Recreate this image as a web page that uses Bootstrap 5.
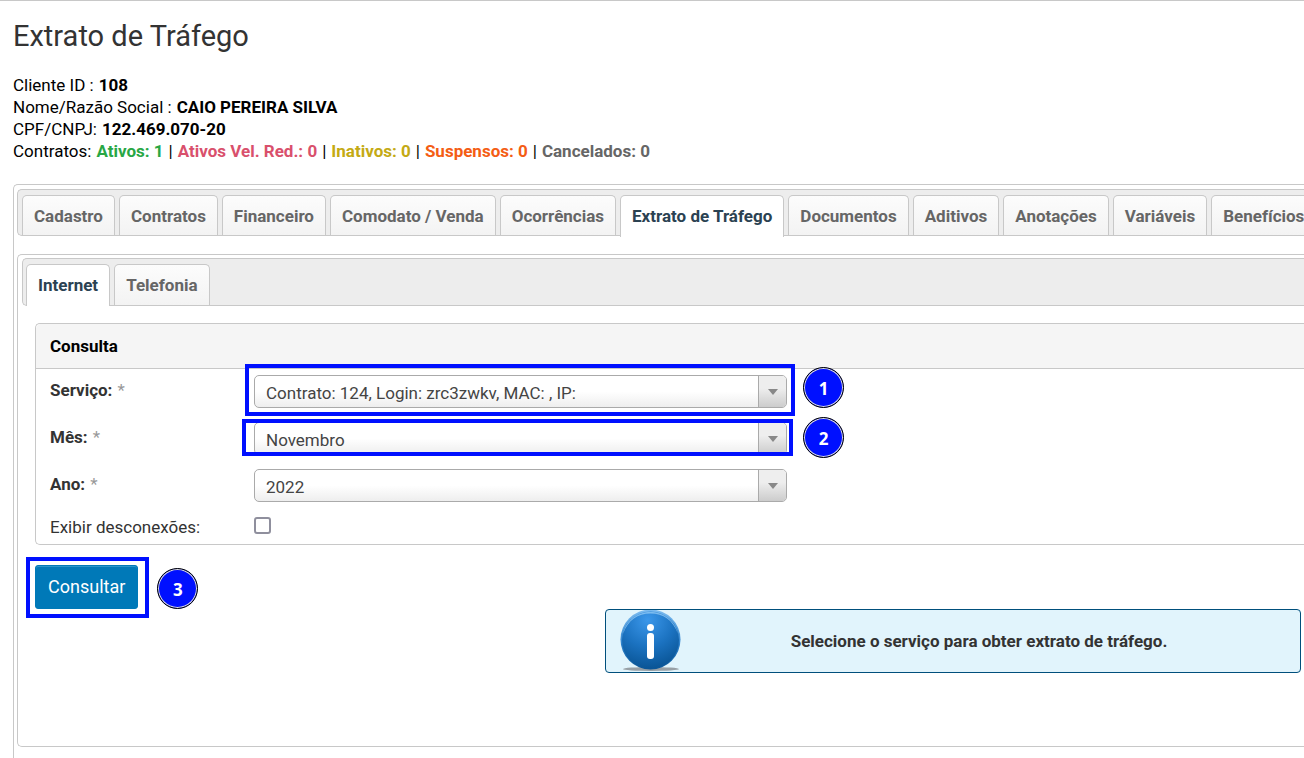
<!DOCTYPE html>
<html lang="pt-BR">
<head>
<meta charset="utf-8">
<meta name="viewport" content="width=device-width, initial-scale=1">
<title>Extrato de Tráfego</title>
<link href="https://cdn.jsdelivr.net/npm/bootstrap@5.3.0/dist/css/bootstrap.min.css" rel="stylesheet">
<style>
  :root { --line: #c8c8c8; --guide: #0010ff; }
  body { font-family: Roboto, "Liberation Sans", sans-serif; font-size: 17px; line-height: 22px; color: #000; background: #fff; overflow-x: hidden; }
  .page { border-top: 1px solid var(--line); padding-left: 13px; overflow: hidden; }
  h1 { font-size: 29px; line-height: 34px; color: #333; margin: 18px 0 21px; }
  .fact { column-gap: 5px; }
  .st-on { color: #28a745; } .st-slow { color: #d9506c; } .st-off { color: #c4aa14; }
  .st-susp { color: #f45d14; } .st-canc { color: #666; }
  /* panels run off the right edge of the window */
  .panel { border: 1px solid var(--line); border-right: 0; border-radius: 5px 0 0 5px; }
  .panel-outer { margin-top: 22px; padding: 4px 0 24px 3px; }
  .panel-inner { margin-top: 18px; padding: 3px 0 73px 4px; }
  .tabbar { background: #ededed; border: 1px solid var(--line); border-right: 0; border-radius: 5px 0 0 5px; gap: 4px; }
  .tabbar .nav-link { padding: 10px 11px 9px; line-height: 20px; font-weight: 700; color: #666; white-space: nowrap; margin: 0; border: 1px solid var(--line); border-bottom: 0; border-radius: 5px 5px 0 0; background: linear-gradient(#fcfcfc, #f3f3f3); }
  .tabbar .nav-link.active { background: #fff; color: #2b4252; margin-bottom: -2px; padding-bottom: 11px; }
  .tabs-main { padding: 5px 0 0 4px; }
  .tabs-sub { padding: 5px 0 0 3px; }
  .tabs-sub .nav-link { padding-bottom: 10px; }
  .tabs-sub .nav-link.active { margin-bottom: -1px; }
  .query { border: 1px solid var(--line); border-right: 0; border-radius: 5px 0 0 5px; margin: 17px 0 0 13px; color: #333; }
  .query-head { background: #f5f5f5; border-bottom: 1px solid var(--line); padding: 11px 14px; font-size: 17px; line-height: 22px; font-weight: 700; color: #000; margin: 0; border-radius: 5px 0 0 0; }
  .query-body { padding: 6px 14px; display: grid; grid-template-columns: 204px minmax(0, 533px); row-gap: 14px; }
  .query-body label { padding-top: 4px; }
  .query-body .check-label { padding-top: 0; }
  .req { color: #999; font-weight: 400; margin-left: 1px; }
  .pick { position: relative; height: 33px; }
  .pick select { appearance: none; width: 100%; height: 100%; font: inherit; color: #444; padding: 2px 40px 0 11px; border: 1px solid #aaa; border-radius: 5px; background: linear-gradient(#fff 50%, #eee); }
  .pick-arrow { position: absolute; top: 1px; bottom: 1px; right: 1px; width: 28px; border-left: 1px solid #aaa; border-radius: 0 4px 4px 0; background: linear-gradient(#eee 40%, #ccc); pointer-events: none; }
  .tick { appearance: none; width: 17px; height: 17px; border: 2px solid #8f8f9d; border-radius: 3px; margin: 1px 0 0; background: #fff; }
  .tick:checked { background: #0079b8; }
  .btn-query { font-size: 18px; line-height: 24px; color: #fff; background: #0079b8; border: 1px solid #0079b8; border-radius: 3px; padding: 9px 12px; box-shadow: inset 0 1px #2b95cb; }
  .btn-query:hover { background: #00699f; color: #fff; }
  .actions { margin: 20px 0 0 13px; }
  /* numbered guide marks laid over the controls */
  .guide { position: absolute; border: 4px solid var(--guide); pointer-events: none; }
  .guide-service { inset: -11px -8px -8px -9px; }
  .guide-month { inset: -3px -6px -1px -12px; }
  .guide-button { inset: -8px -11px -9px -9px; }
  .step { position: absolute; width: 41px; height: 41px; left: calc(100% + 16px); pointer-events: none; border: 1px solid #000; border-radius: 50%; background: var(--guide); box-shadow: inset 0 0 0 1px #ddd; color: #fff; font: 700 17px/42px "Noto Sans", sans-serif; text-align: center; }
  .step-service { top: -8px; }
  .step-month { top: -5px; }
  .step-button { top: 3px; left: calc(100% + 19px); }
  .notice { width: 696px; max-width: 100%; min-height: 64px; margin-right: 3px; border: 1px solid #004f7c; border-radius: 4px; background: #e1f4fc; color: #333; font-weight: 700; padding-left: 14px; }
  .notice svg { flex: none; }
</style>
</head>
<body>
<main class="page">
  <h1 class="fw-normal">Extrato de Tráfego</h1>
  <div class="fact d-flex flex-wrap"><span>Cliente ID :</span> <strong>108</strong></div>
  <div class="fact d-flex flex-wrap"><span>Nome/Razão Social :</span> <strong>CAIO PEREIRA SILVA</strong></div>
  <div class="fact d-flex flex-wrap"><span>CPF/CNPJ:</span> <strong>122.469.070-20</strong></div>
  <div class="fact d-flex flex-wrap"><span>Contratos:</span> <strong class="st-on">Ativos: 1</strong> <span>|</span> <strong class="st-slow">Ativos Vel. Red.: 0</strong> <span>|</span> <strong class="st-off">Inativos: 0</strong> <span>|</span> <strong class="st-susp">Suspensos: 0</strong> <span>|</span> <strong class="st-canc">Cancelados: 0</strong></div>

  <section class="panel panel-outer">
    <nav class="nav tabbar tabs-main flex-nowrap">
      <a class="nav-link" href="#">Cadastro</a>
      <a class="nav-link" href="#">Contratos</a>
      <a class="nav-link" href="#">Financeiro</a>
      <a class="nav-link" href="#">Comodato / Venda</a>
      <a class="nav-link" href="#">Ocorrências</a>
      <a class="nav-link active" href="#" aria-current="page">Extrato de Tráfego</a>
      <a class="nav-link" href="#">Documentos</a>
      <a class="nav-link" href="#">Aditivos</a>
      <a class="nav-link" href="#">Anotações</a>
      <a class="nav-link" href="#">Variáveis</a>
      <a class="nav-link" href="#">Benefícios</a>
    </nav>

    <section class="panel panel-inner">
      <nav class="nav tabbar tabs-sub flex-nowrap">
        <a class="nav-link active" href="#" aria-current="page">Internet</a>
        <a class="nav-link" href="#">Telefonia</a>
      </nav>

      <form>
        <div class="query">
          <h2 class="query-head">Consulta</h2>
          <div class="query-body">
            <label for="servico"><strong>Serviço:</strong> <span class="req">*</span></label>
            <div class="pick">
              <select id="servico"><option>Contrato: 124, Login: zrc3zwkv, MAC: , IP:</option></select>
              <span class="pick-arrow d-flex align-items-center justify-content-center"><svg width="10" height="6"><path d="M0 0h10L5 6z" fill="#888"/></svg></span>
              <span class="guide guide-service"></span><span class="step step-service">1</span>
            </div>
            <label for="mes"><strong>Mês:</strong> <span class="req">*</span></label>
            <div class="pick">
              <select id="mes"><option>Novembro</option></select>
              <span class="pick-arrow d-flex align-items-center justify-content-center"><svg width="10" height="6"><path d="M0 0h10L5 6z" fill="#888"/></svg></span>
              <span class="guide guide-month"></span><span class="step step-month">2</span>
            </div>
            <label for="ano"><strong>Ano:</strong> <span class="req">*</span></label>
            <div class="pick">
              <select id="ano"><option>2022</option></select>
              <span class="pick-arrow d-flex align-items-center justify-content-center"><svg width="10" height="6"><path d="M0 0h10L5 6z" fill="#888"/></svg></span>
            </div>
            <label class="check-label" for="desconexoes">Exibir desconexões:</label>
            <div><input class="tick d-block" type="checkbox" id="desconexoes"></div>
          </div>
        </div>
        <div class="actions d-flex">
          <div class="position-relative">
            <button type="button" class="btn btn-query d-block">Consultar</button>
            <span class="guide guide-button"></span><span class="step step-button">3</span>
          </div>
        </div>
      </form>

      <div class="notice d-flex align-items-center ms-auto" role="status">
        <svg width="62" height="62" viewBox="0 0 62 62" aria-hidden="true">
          <defs>
            <radialGradient id="ball" cx=".45" cy=".15" r=".85"><stop offset="0" stop-color="#3b97ea"/><stop offset=".55" stop-color="#1b72c0"/><stop offset="1" stop-color="#0a5596"/></radialGradient>
            <linearGradient id="rim" x2="0" y2="1"><stop offset="0" stop-color="#7dbcf0"/><stop offset=".6" stop-color="#2a7fca"/><stop offset="1" stop-color="#0a5596"/></linearGradient>
            <filter id="soft"><feGaussianBlur stdDeviation=".6"/></filter>
          </defs>
          <ellipse cx="31" cy="59" rx="28" ry="2" fill="#98a0a6" filter="url(#soft)"/>
          <circle cx="30.500" cy="29.500" r="30" fill="url(#rim)"/>
          <circle cx="30.500" cy="30" r="28.500" fill="url(#ball)"/>
          <path d="M3 24C6 10 18 2 30.500 2S55 10 58 24C53 10 43 3.500 30.500 3.500S8 10 3 24z" fill="#9bd0f8" opacity=".7"/>
          <circle cx="30.500" cy="17.500" r="3.500" fill="#fff"/>
          <rect x="27" y="23" width="7" height="26" rx="3" fill="#fff"/>
        </svg>
        <div class="flex-grow-1 text-center pe-4">Selecione o serviço para obter extrato de tráfego.</div>
      </div>
    </section>
  </section>
</main>
<script src="https://cdn.jsdelivr.net/npm/bootstrap@5.3.0/dist/js/bootstrap.bundle.min.js"></script>
</body>
</html>
